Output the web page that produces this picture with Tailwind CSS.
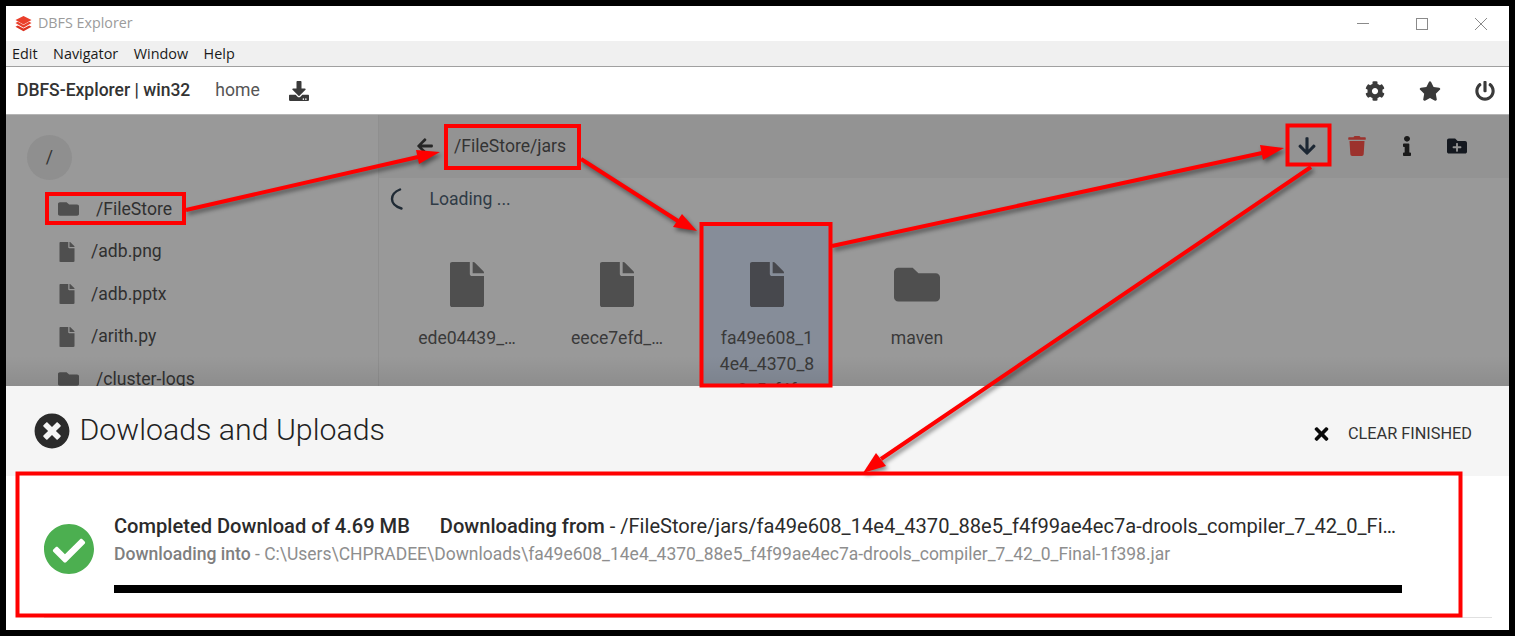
<!DOCTYPE html>
<html>
<head>
<meta charset="utf-8">
<script src="https://cdn.jsdelivr.net/npm/@tailwindcss/browser@4"></script>
</head>
<body class="m-0 bg-black">
<div class="relative w-[1515px] h-[636px] bg-black p-[6px] overflow-hidden font-['Roboto',sans-serif]">
  <div class="w-[1503px] h-[624px] flex flex-col bg-white overflow-hidden">
    <!-- title bar -->
    <div class="h-[35px] shrink-0 flex items-center bg-white pl-[9px] pr-[22px]">
      <svg class="w-[17px] h-[17px]" viewBox="0 0 18 18"><path d="M9 1 17.5 5.2 9 10 .5 5.2Z" fill="#ea3f2b"/><path d="M.5 8.6 3 7.2 9 10.7 15 7.2 17.5 8.6 9 13.4Z" fill="#ea3f2b"/><path d="M.5 12.4 3 11 9 14.4 15 11 17.5 12.4 9 17.2Z" fill="#dd3322"/></svg>
      <span class="ml-[6px] mb-[2px] text-[14.3px] text-[#9b9b9b] font-['Open_Sans',sans-serif]">DBFS Explorer</span>
      <div class="ml-auto flex items-center gap-[47px]">
        <svg class="w-[12px] h-[12px] -translate-y-[1px]" viewBox="0 0 12 12"><path d="M0 6.5H12" stroke="#8a8a8a" stroke-width="1"/></svg>
        <svg class="w-[12px] h-[12px]" viewBox="0 0 12 12"><rect x=".5" y=".5" width="11" height="11" fill="none" stroke="#8a8a8a"/></svg>
        <svg class="w-[12px] h-[12px]" viewBox="0 0 12 12"><path d="M0 0 12 12M12 0 0 12" stroke="#8a8a8a" stroke-width="1"/></svg>
      </div>
    </div>
    <!-- menu -->
    <div class="h-[26px] shrink-0 flex items-center gap-[15.5px] bg-[#f0f0f0] border-b border-[#a0a0a0] pl-[6px] text-[14.4px] text-[#1a1a1a] font-['Open_Sans',sans-serif]">
      <span>Edit</span><span>Navigator</span><span>Window</span><span>Help</span>
    </div>
    <!-- app header -->
    <div class="h-[47px] shrink-0 flex items-center bg-white pl-[11px] text-[#333]">
      <span class="text-[17.5px] font-medium">DBFS-Explorer | win32</span>
      <span class="ml-[25px] text-[17.6px] text-[#555]">home</span>
      <svg class="ml-[29px] w-[20px] h-[20px]" viewBox="0 0 512 512" fill="#3a3a3a"><path d="M216 0h80c13.3 0 24 10.7 24 24v168h87.7c17.8 0 26.7 21.5 14.1 34.1L269.7 378.3c-7.5 7.5-19.8 7.5-27.3 0L90.1 226.1c-12.6-12.6-3.7-34.1 14.1-34.1H192V24c0-13.3 10.7-24 24-24zm296 376v112c0 13.3-10.7 24-24 24H24c-13.3 0-24-10.7-24-24V376c0-13.3 10.7-24 24-24h146.7l49 49c20.1 20.1 52.5 20.1 72.6 0l49-49H488c13.3 0 24 10.7 24 24zm-124 88c0-11-9-20-20-20s-20 9-20 20 9 20 20 20 20-9 20-20zm64 0c0-11-9-20-20-20s-20 9-20 20 9 20 20 20 20-9 20-20z"/></svg>
      <div class="ml-auto flex items-center gap-[34px] pr-[14px]">
        <svg class="w-[20px] h-[20px]" viewBox="0 0 512 512" fill="#3a3a3a"><path d="M487.4 315.7l-42.6-24.6c4.3-23.2 4.3-47 0-70.2l42.6-24.6c4.9-2.8 7.1-8.6 5.5-14-11.1-35.6-30-67.8-54.7-94.6-3.8-4.1-10-5.1-14.8-2.3L380.8 110c-17.9-15.4-38.5-27.3-60.8-35.1V25.8c0-5.6-3.9-10.5-9.4-11.7-36.7-8.2-74.3-7.8-109.2 0-5.5 1.2-9.4 6.1-9.4 11.7V75c-22.2 7.9-42.8 19.8-60.8 35.1L88.7 85.5c-4.9-2.8-11-1.9-14.8 2.3-24.7 26.7-43.6 58.9-54.7 94.6-1.7 5.4.6 11.2 5.5 14L67.3 221c-4.3 23.2-4.3 47 0 70.2l-42.6 24.6c-4.9 2.8-7.1 8.6-5.5 14 11.1 35.6 30 67.8 54.7 94.6 3.8 4.1 10 5.1 14.8 2.3l42.6-24.6c17.9 15.4 38.5 27.3 60.8 35.1v49.2c0 5.6 3.9 10.5 9.4 11.7 36.7 8.2 74.3 7.8 109.2 0 5.5-1.2 9.4-6.1 9.4-11.7v-49.2c22.2-7.9 42.8-19.8 60.8-35.1l42.6 24.6c4.9 2.8 11 1.9 14.8-2.3 24.7-26.7 43.6-58.9 54.7-94.6 1.5-5.5-.7-11.3-5.6-14.1zM256 336c-44.1 0-80-35.9-80-80s35.9-80 80-80 80 35.9 80 80-35.9 80-80 80z"/></svg>
        <svg class="w-[22px] h-[20px]" viewBox="0 0 576 512" fill="#3a3a3a"><path d="M259.3 17.8L194 150.2 47.9 171.5c-26.2 3.8-36.7 36.1-17.7 54.6l105.7 103-25 145.5c-4.5 26.3 23.2 46 46.4 33.7L288 439.6l130.7 68.7c23.2 12.2 50.9-7.4 46.4-33.7l-25-145.5 105.7-103c19-18.5 8.5-50.8-17.7-54.6L382 150.2 316.7 17.8c-11.7-23.6-45.6-23.9-57.4 0z"/></svg>
        <svg class="w-[20px] h-[20px]" viewBox="0 0 512 512" fill="#3a3a3a"><path d="M400 54.1c63 45 104 118.6 104 201.9 0 136.8-110.8 247.7-247.5 248C120 504.3 8.2 393 8 256.4 7.9 173.1 48.9 99.3 111.8 54.2c11.7-8.3 28-4.8 35 7.7L162.6 90c5.9 10.5 3.1 23.8-6.6 31-41.5 30.8-68 79.6-68 134.9-.1 92.3 74.5 168.1 168 168.1 91.6 0 168.6-74.2 168-169.1-.3-51.8-24.7-101.8-68.1-134-9.7-7.2-12.4-20.5-6.5-30.9l15.8-28.1c7-12.4 23.2-16.1 34.8-7.8zM296 264V24c0-13.3-10.7-24-24-24h-32c-13.3 0-24 10.7-24 24v240c0 13.3 10.7 24 24 24h32c13.3 0 24-10.7 24-24z"/></svg>
      </div>
    </div>
    <!-- dimmed explorer -->
    <div class="relative h-[272px] shrink-0 flex bg-[#999999] border-t border-[#b5b5b5] overflow-hidden text-[#333]">
      <!-- sidebar -->
      <div class="w-[373px] h-full shrink-0 border-r border-[#8f8f8f] pl-[21px] pt-[20px]">
        <div class="w-[45px] h-[45px] rounded-full bg-[#8f8f8f] flex items-center justify-center text-[17.6px]">/</div>
        <div class="pt-[8px] pl-[31px] text-[17.6px] leading-[42.5px] text-[#303030]">
          <div class="h-[42.5px] flex items-center"><svg class="w-[21px] h-[18px]" viewBox="0 0 512 512" preserveAspectRatio="none" fill="#4f4f4f"><path d="M464 128H272l-64-64H48C21.49 64 0 85.49 0 112v288c0 26.51 21.49 48 48 48h416c26.51 0 48-21.49 48-48V176c0-26.51-21.49-48-48-48z"/></svg><span class="ml-[17px]">/FileStore</span></div>
          <div class="h-[42.5px] flex items-center"><svg class="ml-[1px] w-[16px] h-[20px]" viewBox="0 0 384 512" fill="#4f4f4f"><path d="M224 136V0H24C10.7 0 0 10.7 0 24v464c0 13.3 10.7 24 24 24h336c13.3 0 24-10.7 24-24V160H248c-13.2 0-24-10.8-24-24zm160-14.1v6.1H256V0h6.1c6.4 0 12.5 2.5 17 7l97.9 98c4.5 4.5 7 10.6 7 16.9z"/></svg><span class="ml-[16px] -mt-[1px]">/adb.png</span></div>
          <div class="h-[42.5px] flex items-center"><svg class="ml-[1px] w-[16px] h-[20px]" viewBox="0 0 384 512" fill="#4f4f4f"><path d="M224 136V0H24C10.7 0 0 10.7 0 24v464c0 13.3 10.7 24 24 24h336c13.3 0 24-10.7 24-24V160H248c-13.2 0-24-10.8-24-24zm160-14.1v6.1H256V0h6.1c6.4 0 12.5 2.5 17 7l97.9 98c4.5 4.5 7 10.6 7 16.9z"/></svg><span class="ml-[16px]">/adb.pptx</span></div>
          <div class="h-[42.5px] flex items-center"><svg class="ml-[1px] w-[16px] h-[20px]" viewBox="0 0 384 512" fill="#4f4f4f"><path d="M224 136V0H24C10.7 0 0 10.7 0 24v464c0 13.3 10.7 24 24 24h336c13.3 0 24-10.7 24-24V160H248c-13.2 0-24-10.8-24-24zm160-14.1v6.1H256V0h6.1c6.4 0 12.5 2.5 17 7l97.9 98c4.5 4.5 7 10.6 7 16.9z"/></svg><span class="ml-[16px] -mt-[1px]">/arith.py</span></div>
          <div class="h-[42.5px] flex items-center"><svg class="w-[21px] h-[18px]" viewBox="0 0 512 512" preserveAspectRatio="none" fill="#4f4f4f"><path d="M464 128H272l-64-64H48C21.49 64 0 85.49 0 112v288c0 26.51 21.49 48 48 48h416c26.51 0 48-21.49 48-48V176c0-26.51-21.49-48-48-48z"/></svg><span class="ml-[17px]">/cluster-logs</span></div>
        </div>
      </div>
      <!-- main -->
      <div class="flex-1 min-w-0 flex flex-col">
        <div class="h-[63px] shrink-0 flex items-center bg-[#939393] pl-[37px] pr-[27px]">
          <svg class="mb-[2px] w-[18px] h-[18px]" viewBox="0 0 448 512" fill="#262626"><path d="M257.5 445.1l-22.2 22.2c-9.4 9.4-24.6 9.4-33.9 0L7 273c-9.4-9.4-9.4-24.6 0-33.9L201.4 44.7c9.4-9.4 24.6-9.4 33.9 0l22.2 22.2c9.5 9.5 9.3 25-.4 34.3L136.6 216H424c13.3 0 24 10.7 24 24v32c0 13.3-10.7 24-24 24H136.6l120.5 114.8c9.8 9.3 10 24.8.4 34.3z"/></svg>
          <span class="ml-[20px] text-[17.6px] text-[#333]">/FileStore/jars</span>
          <div class="ml-auto mb-[2px] flex items-center">
            <div class="w-[50px] flex justify-center"><svg class="w-[18px] h-[20px]" viewBox="0 0 448 512" fill="#1c2733"><path d="M413.1 222.5l22.2 22.2c9.4 9.4 9.4 24.6 0 33.9L241 473c-9.4 9.4-24.6 9.4-33.9 0L12.7 278.6c-9.4-9.4-9.4-24.6 0-33.9l22.2-22.2c9.5-9.5 25-9.3 34.3.4L184 343.4V56c0-13.3 10.7-24 24-24h32c13.3 0 24 10.7 24 24v287.4l114.8-120.5c9.3-9.8 24.8-10 34.3-.4z"/></svg></div>
            <div class="w-[50px] flex justify-center"><svg class="w-[18px] h-[20px]" viewBox="0 0 448 512" fill="#9c322d"><path d="M432 32H312l-9.4-18.7A24 24 0 0 0 281.1 0H166.8a23.72 23.72 0 0 0-21.4 13.3L136 32H16A16 16 0 0 0 0 48v32a16 16 0 0 0 16 16h416a16 16 0 0 0 16-16V48a16 16 0 0 0-16-16zM53.2 467a48 48 0 0 0 47.9 45h245.8a48 48 0 0 0 47.9-45L416 128H32z"/></svg></div>
            <div class="w-[50px] flex justify-center"><svg class="w-[8px] h-[20px]" viewBox="0 0 192 512" preserveAspectRatio="none" fill="#1a1a1a"><path d="M20 424.229h20V279.771H20c-11.046 0-20-8.954-20-20V212c0-11.046 8.954-20 20-20h112c11.046 0 20 8.954 20 20v212.229h20c11.046 0 20 8.954 20 20V492c0 11.046-8.954 20-20 20H20c-11.046 0-20-8.954-20-20v-47.771c0-11.046 8.954-20 20-20zM96 0C56.235 0 24 32.235 24 72s32.235 72 72 72 72-32.235 72-72S135.764 0 96 0z"/></svg></div>
            <div class="w-[50px] flex justify-center"><svg class="w-[20px] h-[20px]" viewBox="0 0 512 512" fill="#14181f"><path d="M464 128H272l-64-64H48C21.49 64 0 85.49 0 112v288c0 26.51 21.49 48 48 48h416c26.51 0 48-21.49 48-48V176c0-26.51-21.49-48-48-48zm-96 168c0 8.84-7.16 16-16 16h-72v72c0 8.84-7.16 16-16 16h-16c-8.84 0-16-7.16-16-16v-72h-72c-8.84 0-16-7.16-16-16v-16c0-8.84 7.16-16 16-16h72v-72c0-8.84 7.16-16 16-16h16c8.84 0 16 7.16 16 16v72h72c8.84 0 16 7.16 16 16v16z"/></svg></div>
          </div>
        </div>
        <div class="h-[44px] shrink-0 flex items-center pl-[10px]">
          <svg class="mb-[2px] w-[16px] h-[22px]" viewBox="0 0 16 22" fill="none"><path d="M11 1.5C6 3.5 3 7 3 11c0 4 3 7.5 9.5 9.5" stroke="#1f2a35" stroke-width="2.4" stroke-linecap="round"/></svg>
          <span class="ml-[24.5px] mb-[2px] text-[17.6px] text-[#2f3b46]">Loading ...</span>
        </div>
        <div class="flex gap-[20px] pl-[23px] text-[17.6px] leading-[26px] text-[#3a3a3a]">
          <div class="w-[130px] h-[160px] shrink-0 pt-[40px] flex flex-col items-center text-center">
            <svg class="w-[34px] h-[45px] shrink-0" viewBox="0 0 384 512" preserveAspectRatio="none" fill="#4f4f4f"><path d="M224 136V0H24C10.7 0 0 10.7 0 24v464c0 13.3 10.7 24 24 24h336c13.3 0 24-10.7 24-24V160H248c-13.2 0-24-10.8-24-24zm160-14.1v6.1H256V0h6.1c6.4 0 12.5 2.5 17 7l97.9 98c4.5 4.5 7 10.6 7 16.9z"/></svg>
            <span class="mt-[18px]">ede04439_…</span>
          </div>
          <div class="w-[130px] h-[160px] shrink-0 pt-[40px] flex flex-col items-center text-center">
            <svg class="w-[34px] h-[45px] shrink-0" viewBox="0 0 384 512" preserveAspectRatio="none" fill="#4f4f4f"><path d="M224 136V0H24C10.7 0 0 10.7 0 24v464c0 13.3 10.7 24 24 24h336c13.3 0 24-10.7 24-24V160H248c-13.2 0-24-10.8-24-24zm160-14.1v6.1H256V0h6.1c6.4 0 12.5 2.5 17 7l97.9 98c4.5 4.5 7 10.6 7 16.9z"/></svg>
            <span class="mt-[18px]">eece7efd_…</span>
          </div>
          <div class="w-[130px] h-[180px] shrink-0 pt-[40px] flex flex-col items-center text-center bg-[#868d99]">
            <svg class="w-[34px] h-[45px] shrink-0" viewBox="0 0 384 512" preserveAspectRatio="none" fill="#47484d"><path d="M224 136V0H24C10.7 0 0 10.7 0 24v464c0 13.3 10.7 24 24 24h336c13.3 0 24-10.7 24-24V160H248c-13.2 0-24-10.8-24-24zm160-14.1v6.1H256V0h6.1c6.4 0 12.5 2.5 17 7l97.9 98c4.5 4.5 7 10.6 7 16.9z"/></svg>
            <span class="mt-[18px]">fa49e608_1<br>4e4_4370_8<br>8e5_f4f</span>
          </div>
          <div class="w-[130px] h-[160px] shrink-0 pt-[40px] flex flex-col items-center text-center">
            <svg class="w-[46px] h-[45px] shrink-0" viewBox="0 0 512 512" preserveAspectRatio="none" fill="#4f4f4f"><path d="M464 128H272l-64-64H48C21.49 64 0 85.49 0 112v288c0 26.51 21.49 48 48 48h416c26.51 0 48-21.49 48-48V176c0-26.51-21.49-48-48-48z"/></svg>
            <span class="mt-[18px]">maven</span>
          </div>
        </div>
      </div>
      <div class="absolute left-0 right-0 bottom-0 h-[30px] bg-linear-to-t from-black/8 to-transparent"></div>
    </div>
    <!-- downloads header -->
    <div class="h-[90px] shrink-0 flex items-center bg-[#f5f5f5] pl-[28px] pr-[37px]">
      <svg class="w-[36px] h-[36px]" viewBox="0 0 512 512" fill="#2b2b2b"><path d="M256 8C119 8 8 119 8 256s111 248 248 248 248-111 248-248S393 8 256 8zm121.6 313.1c4.7 4.7 4.7 12.3 0 17L338 377.6c-4.7 4.7-12.3 4.7-17 0L256 312l-65.1 65.6c-4.7 4.7-12.3 4.7-17 0L134.4 338c-4.7-4.7-4.7-12.3 0-17l65.6-65-65.6-65.1c-4.7-4.7-4.7-12.3 0-17l39.6-39.6c4.7-4.7 12.3-4.7 17 0l65 65.7 65.1-65.6c4.7-4.7 12.3-4.7 17 0l39.6 39.6c4.7 4.7 4.7 12.3 0 17L312 256l65.6 65.1z"/></svg>
      <span class="ml-[9.5px] mb-[2px] text-[30.3px] font-light text-[#222]">Dowloads and Uploads</span>
      <div class="ml-auto mt-[6px] flex items-center">
        <svg class="w-[15px] h-[20px]" viewBox="0 0 352 512" fill="#0a0a0a"><path d="M242.72 256l100.07-100.07c12.28-12.28 12.28-32.19 0-44.48l-22.24-22.24c-12.28-12.28-32.19-12.28-44.48 0L176 189.28 75.93 89.21c-12.28-12.28-32.19-12.28-44.48 0L9.21 111.45c-12.28 12.28-12.28 32.19 0 44.48L109.28 256 9.21 356.07c-12.28 12.28-12.28 32.19 0 44.48l22.24 22.24c12.28 12.28 32.2 12.28 44.48 0L176 322.72l100.07 100.07c12.28 12.28 32.2 12.28 44.48 0l22.24-22.24c12.28-12.28 12.28-32.19 0-44.48L242.72 256z"/></svg>
        <span class="ml-[19px] text-[16.3px] text-[#333]">CLEAR FINISHED</span>
      </div>
    </div>
    <!-- download row -->
    <div class="flex-1 bg-white pl-[38px] pr-[17px] flex flex-col">
      <div class="flex-1 flex border-b border-[#e0e0e0]">
        <svg class="mt-[48px] w-[50px] h-[50px] shrink-0" viewBox="8 8 496 496" fill="#4caf50"><path d="M504 256c0 136.967-111.033 248-248 248S8 392.967 8 256 119.033 8 256 8s248 111.033 248 248zM227.314 387.314l184-184c6.248-6.248 6.248-16.379 0-22.627l-22.627-22.627c-6.248-6.249-16.379-6.249-22.628 0L216 308.118l-70.059-70.059c-6.248-6.248-16.379-6.248-22.628 0l-22.627 22.627c-6.248 6.248-6.248 16.379 0 22.627l104 104c6.249 6.249 16.379 6.249 22.628 0z"/></svg>
        <div class="ml-[20px] w-[1288px] min-w-0 pt-[38px]">
          <div class="w-[1282px] text-[20.1px] leading-[24px] text-[#2b2b2b] truncate"><span class="font-medium">Completed Download of 4.69 MB</span><span class="font-medium ml-[30px]">Downloading from</span> - /FileStore/jars/fa49e608_14e4_4370_88e5_f4f99ae4ec7a-drools_compiler_7_42_0_Final-1f398.jar</div>
          <div class="mt-[4px] text-[17.48px] leading-[24px] text-[#8e8e8e] truncate"><span class="font-medium text-[#7f7f7f] text-[17.6px]">Downloading into</span> - C:\Users\CHPRADEE\Downloads\fa49e608_14e4_4370_88e5_f4f99ae4ec7a-drools_compiler_7_42_0_Final-1f398.jar</div>
          <div class="mt-[19px] h-[8px] bg-black"></div>
        </div>
      </div>
      <div class="h-[12px] shrink-0"></div>
    </div>
  </div>
  <!-- annotations -->
  <svg class="absolute left-0 top-0 w-[1515px] h-[636px]" viewBox="0 0 1515 636" fill="none">
    <g class="drop-shadow-[2px_3px_2px_rgba(0,0,0,0.45)]">
      <path d="M186 210 418 157M581 159 678 221M832 246 1262 153M1311 167 881 459" stroke="#ff0000" stroke-width="4"/>
      <g fill="#ff0000">
        <path d="M440 152 416 150 419 164Z"/>
        <path d="M697 231 682 214 673 227Z"/>
        <path d="M1284 148 1260 145 1263 160Z"/>
        <path d="M863 473 876 453 886 466Z"/>
      </g>
    </g>
    <g stroke="#ff0000" stroke-width="4">
      <rect x="47" y="194" width="137" height="29"/>
      <rect x="446" y="126" width="133" height="42"/>
      <rect x="701.5" y="224" width="129" height="161.5"/>
      <rect x="1287.5" y="125.5" width="42" height="39"/>
      <rect x="17.5" y="473.5" width="1443" height="142"/>
    </g>
  </svg>
</div>
</body>
</html>
